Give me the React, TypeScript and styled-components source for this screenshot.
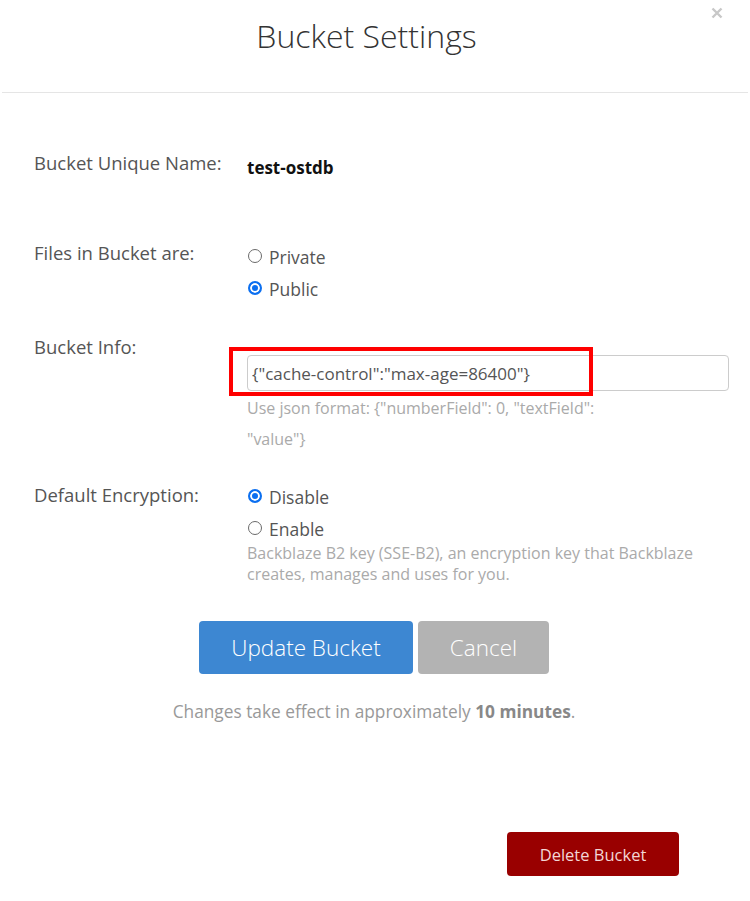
import React from "react";
import styled, { createGlobalStyle } from "styled-components";

const Global = createGlobalStyle`
  html, body { margin: 0; padding: 0; background: #fff; }
  body { font-family: "Open Sans", "Liberation Sans", sans-serif; }
  * { box-sizing: border-box; }
`;

const Modal = styled.div`
  position: relative;
  width: 750px;
  height: 901px;
  background: #fff;
`;

const Header = styled.div`
  height: 93px;
  padding: 18px 17px 0 0;
  margin: 0 2px;
  border-bottom: 1px solid #e5e5e5;
  text-align: center;
`;

const Title = styled.h1`
  margin: 0;
  font-size: 32px;
  font-weight: 300;
  line-height: 35px;
  color: #333;
`;

const Close = styled.button`
  position: absolute;
  top: 7px;
  right: 27px;
  width: 12px;
  height: 12px;
  padding: 0;
  border: 0;
  background: none;
  display: flex;
`;

const Body = styled.div`
  padding: 0 21px 0 34px;
  display: flex;
  flex-direction: column;
`;

const Row = styled.div<{ $top: number }>`
  display: grid;
  grid-template-columns: 213px 1fr;
  margin-top: ${(p) => p.$top}px;
  align-items: start;
`;

const Label = styled.div`
  font-size: 18.5px;
  line-height: 24px;
  color: #555;
`;

const Value = styled.div`
  margin-top: 5px;
  font-size: 17px;
  line-height: 24px;
  font-weight: 700;
  color: #111;
`;

const Options = styled.div<{ $top: number }>`
  margin-top: ${(p) => p.$top}px;
  display: flex;
  flex-direction: column;
`;

const Option = styled.label`
  display: flex;
  align-items: center;
  height: 32px;
  font-size: 17.5px;
  color: #555;
  padding-left: 1px;
`;

const Dot = styled.span<{ $on?: boolean }>`
  width: 14px;
  height: 14px;
  border-radius: 50%;
  margin-right: 7px;
  border: ${(p) => (p.$on ? "2px solid #0b6ff0" : "1px solid #6a6a6a")};
  background: ${(p) => (p.$on ? "#0b6ff0" : "#fff")};
  box-shadow: ${(p) => (p.$on ? "inset 0 0 0 2px #fff" : "none")};
  margin-top: -2px;
`;

const Field = styled.div`
  display: flex;
  flex-direction: column;
`;

const InputWrap = styled.div`
  position: relative;
  margin-top: 20px;
`;

const Input = styled.input`
  width: 100%;
  height: 36px;
  border: 1px solid #ccc;
  border-radius: 4px;
  padding: 0 4px;
  font-family: "Open Sans", "Liberation Sans", sans-serif;
  font-size: 17px;
  color: #555;
  outline: none;
`;

const Highlight = styled.div`
  position: absolute;
  left: -18px;
  top: -8px;
  width: 364px;
  height: 49px;
  border: 4px solid #ff0000;
  pointer-events: none;
`;

const Hint = styled.div<{ $lh: number; $max?: number; $top: number }>`
  margin-top: ${(p) => p.$top}px;
  font-size: 16px;
  line-height: ${(p) => p.$lh}px;
  color: #aaa;
  max-width: ${(p) => (p.$max ? `${p.$max}px` : "none")};
`;

const Buttons = styled.div`
  display: flex;
  justify-content: center;
  gap: 5px;
  margin-top: 36px;
  padding-right: 15px;
`;

const BigButton = styled.button<{ $bg: string; $w: number }>`
  width: ${(p) => p.$w}px;
  height: 53px;
  border: 0;
  border-radius: 4px;
  background: ${(p) => p.$bg};
  color: #fff;
  font-family: "Open Sans", "Liberation Sans", sans-serif;
  font-size: 22.5px;
  font-weight: 300;
`;

const Note = styled.p`
  margin: 26px 0 0;
  text-align: center;
  font-size: 17.3px;
  line-height: 24px;
  color: #999;
  padding-right: 15px;
  b { color: #888; font-weight: 700; }
`;

const Footer = styled.div`
  display: flex;
  justify-content: flex-end;
  margin-top: 108px;
  padding-right: 71px;
`;

const DeleteButton = styled.button`
  width: 172px;
  height: 44px;
  border: 0;
  border-radius: 4px;
  background: #990000;
  color: #f3d6d6;
  font-family: "Open Sans", "Liberation Sans", sans-serif;
  font-size: 16.5px;
`;

export default function App() {
  return (
    <Modal>
      <Global />
      <Header>
        <Title>Bucket Settings</Title>
      </Header>
      <Close aria-label="Close">
        <svg width="12" height="12" viewBox="0 0 12 12">
          <path d="M1.5 1.5 L10.5 10.5 M10.5 1.5 L1.5 10.5" stroke="#c8c8c8" strokeWidth="2.4" />
        </svg>
      </Close>
      <Body>
        <Row $top={58}>
          <Label>Bucket Unique Name:</Label>
          <Value>test-ostdb</Value>
        </Row>
        <Row $top={61}>
          <Label>Files in Bucket are:</Label>
          <Options $top={0}>
            <Option><Dot />Private</Option>
            <Option><Dot $on />Public</Option>
          </Options>
        </Row>
        <Row $top={30}>
          <Label>Bucket Info:</Label>
          <Field>
            <InputWrap>
              <Input readOnly value={'{"cache-control":"max-age=86400"}'} />
              <Highlight />
            </InputWrap>
            <Hint $lh={31} $max={370} $top={2}>
              Use json format: {'{"numberField": 0, "textField": "value"}'}
            </Hint>
          </Field>
        </Row>
        <Row $top={28}>
          <Label>Default Encryption:</Label>
          <Field>
            <Options $top={-2}>
              <Option><Dot $on />Disable</Option>
              <Option><Dot />Enable</Option>
            </Options>
            <Hint $lh={21} $top={-2}>
              Backblaze B2 key (SSE-B2), an encryption key that Backblaze creates, manages and uses for you.
            </Hint>
          </Field>
        </Row>
        <Buttons>
          <BigButton $bg="#3d87d2" $w={214}>Update Bucket</BigButton>
          <BigButton $bg="#b3b3b3" $w={131}>Cancel</BigButton>
        </Buttons>
        <Note>
          Changes take effect in approximately <b>10 minutes</b>.
        </Note>
      </Body>
      <Footer>
        <DeleteButton>Delete Bucket</DeleteButton>
      </Footer>
    </Modal>
  );
}
